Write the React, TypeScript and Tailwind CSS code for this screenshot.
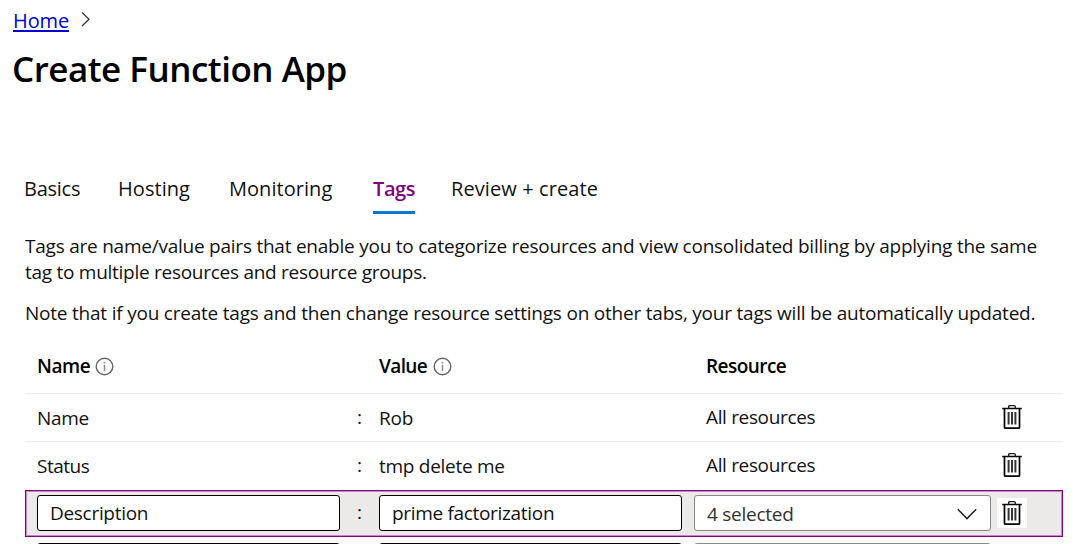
function InfoIcon() {
  return (
    <svg className="h-[19px] w-[19px] shrink-0" viewBox="0 0 19 19" fill="none">
      <circle cx="9.5" cy="9.5" r="8.3" stroke="#666" strokeWidth="1.4" />
      <path d="M9.5 7.8V14M9.5 5v1.6" stroke="#8a8a8a" strokeWidth="1.5" />
    </svg>
  );
}

function TrashIcon() {
  return (
    <svg className="block h-[30px] w-[30px]" viewBox="0 0 30 30" fill="none">
      <path d="M5.2 6.5h19.6" stroke="#000" strokeWidth="1.5" />
      <path d="M11.7 6.5V4.6q0-1 1-1h4.6q1 0 1 1v1.9" stroke="#222" strokeWidth="1.4" />
      <path d="M7.5 6.5v18.7q0 1 1 1h13q1 0 1-1V6.5" stroke="#000" strokeWidth="1.7" />
      <path d="M11.6 10v12.5M15 10v12.5M18.4 10v12.5" stroke="#333" strokeWidth="2" />
    </svg>
  );
}

function DeleteButton() {
  return (
    <button aria-label="Delete" className="block h-[30px] w-[30px] bg-white">
      <TrashIcon />
    </button>
  );
}

function TagRow({ name, value, nameClass, valueClass }: { name: string; value: string; nameClass: string; valueClass: string }) {
  return (
    <div className="grid h-12 grid-cols-[320px_22px_327px_291px_30px] items-start border-t border-[#edebe9] pt-2 pl-3">
      <span className={`pt-[3px] ${nameClass}`}>{name}</span>
      <span className="pt-[2px]">:</span>
      <span className={`pt-[3px] ${valueClass}`}>{value}</span>
      <span className="pt-[2px] tracking-[-0.35px]">All resources</span>
      <DeleteButton />
    </div>
  );
}

function ChevronDown() {
  return (
    <svg className="h-3 w-5" viewBox="0 0 20 12" fill="none">
      <path d="M.8 1.2l9.2 9.4 9.2-9.4" stroke="#222" strokeWidth="1.5" />
    </svg>
  );
}

export default function App() {
  return (
    <div className="h-[544px] w-[1073px] overflow-hidden bg-white font-['Open_Sans',sans-serif] text-[19px] leading-[26px] text-[#111]">
      <nav className="flex h-[38px] items-start pt-[7px] pl-[13px] text-[20px] leading-7">
        <a className="relative text-[#0000cc]" href="#">
          <span className="tracking-[-0.1px]">Home</span>
          <span className="absolute top-[23px] left-0 h-[2px] w-[56px] bg-[#0000cc]" />
        </a>
        <svg className="mt-1 ml-3 h-4 w-[10px]" viewBox="0 0 10 16" fill="none">
          <path d="M1 1.4l7 6.8-7 6.8" stroke="#333" strokeWidth="1.3" />
        </svg>
      </nav>
      <h1 className="mt-[7px] pl-3 text-[35px] leading-[48px] font-semibold tracking-[-0.5px] text-black">Create Function App</h1>

      <nav className="mt-[82px] flex h-[39px] pl-[24px] text-[20px] leading-[28px]">
        <span className="w-[94px] tracking-[-0.25px]">Basics</span>
        <span className="w-[111px] tracking-[0.05px]">Hosting</span>
        <span className="w-[144px] tracking-[0.05px]">Monitoring</span>
        <span className="h-full w-[42px] border-b-[3px] border-[#0078d4] font-semibold tracking-[-0.42px] text-[#800080]">Tags</span>
        <span className="pl-9 tracking-[0.1px]">Review + create</span>
      </nav>

      <main className="pt-[19px] pl-[25px] whitespace-nowrap">
        <p className="tracking-[-0.235px]">
          Tags are name/value pairs that enable you to categorize resources and view consolidated billing by applying the same
          <br />
          <span className="tracking-[-0.27px]">tag to multiple resources and resource groups.</span>
        </p>
        <p className="mt-[15px] tracking-[-0.215px]">
          Note that if you create tags and then change resource settings on other tabs, your tags will be automatically updated.
        </p>

        <section className="mt-[14px] w-[1038px]">
          <div className="grid h-[53px] grid-cols-[342px_327px_1fr] items-start pt-[13px] pl-3 font-semibold text-black">
            <div className="flex">
              <span className="w-[58px] tracking-[-0.4px]">Name</span>
              <span className="pt-1"><InfoIcon /></span>
            </div>
            <div className="flex">
              <span className="w-[54px] tracking-[-0.6px]">Value</span>
              <span className="pt-1"><InfoIcon /></span>
            </div>
            <span className="tracking-[-0.55px]">Resource</span>
          </div>
          <TagRow name="Name" value="Rob" nameClass="tracking-[-0.35px]" valueClass="tracking-[-0.2px]" />
          <TagRow name="Status" value="tmp delete me" nameClass="tracking-[-0.5px]" valueClass="tracking-[-0.28px]" />
          <div className="h-[1px]" />
          <div className="h-[47px] border border-[#800080]">
            <div className="flex h-full border border-[#c987c9] bg-[#ebeae9] pt-[3px] pl-[10px]">
              <div className="h-9 w-[303px] rounded-[3px] border border-black bg-white pt-[4px] pl-3 tracking-[-0.3px]">Description</div>
              <span className="w-[39px] pt-[4px] pl-[17px]">:</span>
              <div className="h-9 w-[303px] rounded-[3px] border border-black bg-white pt-[4px] pl-3 tracking-[-0.32px]">prime factorization</div>
              <div className="ml-3 flex h-9 w-[297px] justify-between rounded-[3px] border border-[#8a8886] bg-white pt-[5px] pr-[13px] pl-3 text-[#333] tracking-[-0.25px]">
                <span>4 selected</span>
                <span className="pt-[7px]"><ChevronDown /></span>
              </div>
              <div className="mt-[3px] ml-[6px] h-[30px]">
                <DeleteButton />
              </div>
            </div>
          </div>
          <div className="mt-[6px] flex pl-3">
            <div className="h-9 w-[303px] rounded-[3px] border border-black" />
            <div className="ml-[39px] h-9 w-[303px] rounded-[3px] border border-black" />
            <div className="ml-3 h-9 w-[297px] rounded-[3px] border border-[#8a8886]" />
          </div>
        </section>
      </main>
    </div>
  );
}
